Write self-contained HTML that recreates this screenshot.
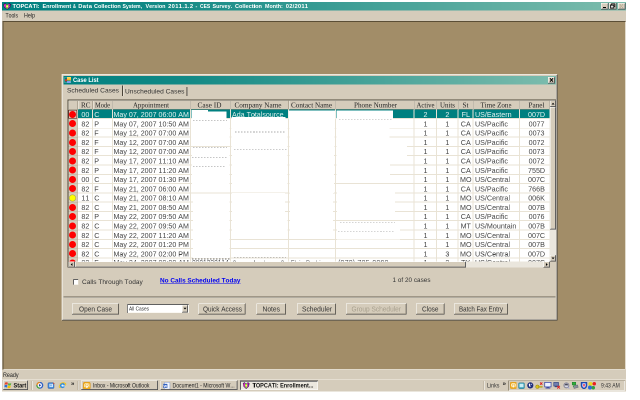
<!DOCTYPE html>
<html><head><meta charset="utf-8"><title>TOPCATI: Enrollment &amp; Data Collection System</title>
<style>
html,body{margin:0;padding:0;background:#fff;width:640px;height:400px;overflow:hidden}
#root{position:absolute;left:0;top:0;width:1280px;height:800px;transform:scale(0.5);transform-origin:0 0;overflow:hidden;background:#fff;will-change:transform}
#root div,#root span,#root svg,#root i{position:absolute;box-sizing:border-box}
.t{white-space:pre;font-kerning:none}
.s{font-family:"Liberation Sans",sans-serif}
.r{font-family:"Liberation Serif",serif}
.b{font-weight:bold}
i{font-style:normal}
</style></head><body><div id="root">
<div style="left:4px;top:4px;width:1248px;height:779.4px;background:#d5ccbb"></div>
<div style="left:4px;top:4px;width:1248px;height:17px;background:linear-gradient(90deg,#008080 0%,#128985 25%,#7dbcad 100%)"></div>
<svg style="left:6px;top:5.8px" width="16.6" height="13.6" viewBox="0 0 16 16" preserveAspectRatio="none"><path d="M0.5 3 L4 0.5 L8 3.5 L12 0.5 L15.5 3 L14 10 L8 15.5 L2 10Z" fill="#1a1030"/><path d="M1.5 3.5 L5 2 L8 5 L11 2 L14.5 3.5 L13.5 9.5 L8 14.5 L2.5 9.5Z" fill="#c426c4"/><path d="M5.4 4.5 L8 3.6 L10.6 4.5 L10 10.5 L8 14 L6 10.5Z" fill="#7ef01a"/><circle cx="8" cy="8" r="2" fill="#fff46a"/><path d="M1.5 3.5 L4.5 5 L3 8.5Z" fill="#e83aa8"/><path d="M14.5 3.5 L11.5 5 L13 8.5Z" fill="#6a1a8a"/></svg>
<span class="t s b" style="left:25.2px;top:5.34px;font-size:11.6px;line-height:13.92px;letter-spacing:0.000px;color:#fff;;transform:scaleX(0.9896);transform-origin:0 50%;">TOPCATI:</span>
<span class="t s b" style="left:84.6px;top:5.34px;font-size:11.6px;line-height:13.92px;letter-spacing:0.000px;color:#fff;;transform:scaleX(0.9475);transform-origin:0 50%;">Enrollment</span>
<span class="t s b" style="left:146.2px;top:5.34px;font-size:11.6px;line-height:13.92px;letter-spacing:0.000px;color:#fff;;transform:scaleX(0.6924);transform-origin:0 50%;">&amp;</span>
<span class="t s b" style="left:156.4px;top:5.34px;font-size:11.6px;line-height:13.92px;letter-spacing:0.819px;color:#fff;">Data</span>
<span class="t s b" style="left:187.6px;top:5.34px;font-size:11.6px;line-height:13.92px;letter-spacing:0.000px;color:#fff;;transform:scaleX(0.9560);transform-origin:0 50%;">Collection</span>
<span class="t s b" style="left:245px;top:5.34px;font-size:11.6px;line-height:13.92px;letter-spacing:0.000px;color:#fff;;transform:scaleX(0.8766);transform-origin:0 50%;">System,</span>
<span class="t s b" style="left:291.2px;top:5.34px;font-size:11.6px;line-height:13.92px;letter-spacing:0.000px;color:#fff;;transform:scaleX(0.9401);transform-origin:0 50%;">Version</span>
<span class="t s b" style="left:336.2px;top:5.34px;font-size:11.6px;line-height:13.92px;letter-spacing:0.692px;color:#fff;">2011.1.2</span>
<span class="t s b" style="left:391.4px;top:5.34px;font-size:11.6px;line-height:13.92px;letter-spacing:0.000px;color:#fff;;transform:scaleX(0.9319);transform-origin:0 50%;">-</span>
<span class="t s b" style="left:399.6px;top:5.34px;font-size:11.6px;line-height:13.92px;letter-spacing:0.000px;color:#fff;;transform:scaleX(0.8553);transform-origin:0 50%;">CES</span>
<span class="t s b" style="left:424.6px;top:5.34px;font-size:11.6px;line-height:13.92px;letter-spacing:0.000px;color:#fff;;transform:scaleX(0.9352);transform-origin:0 50%;">Survey.</span>
<span class="t s b" style="left:470.2px;top:5.34px;font-size:11.6px;line-height:13.92px;letter-spacing:0.000px;color:#fff;;transform:scaleX(0.9595);transform-origin:0 50%;">Collection</span>
<span class="t s b" style="left:529.6px;top:5.34px;font-size:11.6px;line-height:13.92px;letter-spacing:0.000px;color:#fff;;transform:scaleX(0.9212);transform-origin:0 50%;">Month:</span>
<span class="t s b" style="left:571.6px;top:5.34px;font-size:11.6px;line-height:13.92px;letter-spacing:0.411px;color:#fff;">02/2011</span>
<div style="left:1202px;top:6.4px;width:14.6px;height:12.8px;background:#d5ccbb;box-shadow:inset -1px -1px 0 #404040,inset 1px 1px 0 #fff,inset -2px -2px 0 #808080"><i style="position:absolute;left:4px;bottom:3px;width:6px;height:2.4px;background:#000"></i></div>
<div style="left:1217.6px;top:6.4px;width:15px;height:12.8px;background:#d5ccbb;box-shadow:inset -1px -1px 0 #404040,inset 1px 1px 0 #fff,inset -2px -2px 0 #808080"><svg width="15" height="13" viewBox="0 0 15 13" style="left:0;top:0"><rect x="5" y="1.5" width="6.5" height="6" fill="none" stroke="#111" stroke-width="1.6"/><rect x="3" y="4" width="6.5" height="6" fill="#ddd" stroke="#111" stroke-width="1.6"/><rect x="3" y="3.6" width="6.5" height="1.6" fill="#111"/></svg></div>
<div style="left:1236px;top:6.4px;width:14.6px;height:12.8px;background:#d5ccbb;box-shadow:inset -1px -1px 0 #404040,inset 1px 1px 0 #fff,inset -2px -2px 0 #808080"><svg width="15" height="13" viewBox="0 0 15 13" style="left:0;top:0"><path d="M4 2.5 L10.5 10 M10.5 2.5 L4 10" stroke="#a89a7c" stroke-width="1.7" fill="none"/><path d="M5 2.5 L11.5 10 M11.5 2.5 L5 10" stroke="#fff" stroke-width="0.8" fill="none" opacity="0.7"/></svg></div>
<span class="t s" style="left:11px;top:24px;font-size:12px;line-height:14.4px;letter-spacing:0.000px;color:#222;;transform:scaleX(0.8520);transform-origin:0 50%;">Tools</span>
<span class="t s" style="left:48px;top:24px;font-size:12px;line-height:14.4px;letter-spacing:0.000px;color:#222;;transform:scaleX(0.8914);transform-origin:0 50%;">Help</span>
<div style="left:5.2px;top:42px;width:1245.6px;height:697.2px;background:#a28d68;box-shadow:inset 2px 2px 0 #5b4e36, inset -1px -1px 0 #efe9dc"></div>
<span class="t s" style="left:6.4px;top:742.2px;font-size:13px;line-height:15.6px;letter-spacing:0.000px;color:#222;;transform:scaleX(0.8303);transform-origin:0 50%;">Ready</span>
<div style="left:4px;top:758.4px;width:1248px;height:25px;background:#d5ccbb;border-top:1px solid #f4f0e6"></div>
<div style="left:123.2px;top:148px;width:992.2px;height:492.6px;background:#d5ccbb;box-shadow:inset 1px 1px 0 #ddd5c5,inset -1px -1px 0 #404040,inset 2px 2px 0 #fbf9f4,inset -2px -2px 0 #808080"></div>
<div style="left:126.8px;top:151.8px;width:985.2px;height:17px;background:linear-gradient(90deg,#008080 0%,#128985 25%,#7dbcad 100%)"></div>
<div style="left:128.6px;top:154.4px;width:13.4px;height:11.6px;box-shadow:inset 0 0 0 1px rgba(190,220,215,.55)"></div>
<div style="left:133.8px;top:154.2px;width:8.4px;height:6.8px;background:linear-gradient(180deg,#ffe070,#f0b010);border-radius:1px"></div>
<div style="left:129.8px;top:157.8px;width:4.6px;height:5.2px;background:#d83030;border-radius:2px"></div>
<div style="left:134px;top:162.4px;width:7.4px;height:3.4px;background:#7a9cf4;border-radius:1px"></div>
<span class="t s b" style="left:145.6px;top:152.8px;font-size:12px;line-height:14.4px;letter-spacing:0.000px;color:#fff;;transform:scaleX(0.9596);transform-origin:0 50%;">Case List</span>
<div style="left:1095.6px;top:153.8px;width:14.6px;height:12.8px;background:#d5ccbb;box-shadow:inset -1px -1px 0 #404040,inset 1px 1px 0 #fff,inset -2px -2px 0 #808080"><svg width="15" height="13" viewBox="0 0 15 13" style="left:0;top:0"><path d="M4 2.6 L10 9.4 M10 2.6 L4 9.4" stroke="#000" stroke-width="2" fill="none"/></svg></div>
<span class="t s" style="left:134px;top:172.68px;font-size:13.2px;line-height:15.84px;letter-spacing:0.038px;color:#333;">Scheduled Cases</span>
<div style="left:243.8px;top:171.2px;width:1.8px;height:21.2px;background:#4a4438"></div>
<div style="left:245.6px;top:171.2px;width:1.4px;height:21.2px;background:#f4f0e8"></div>
<span class="t s" style="left:250px;top:174.68px;font-size:13.2px;line-height:15.84px;letter-spacing:0.054px;color:#333;">Unscheduled Cases</span>
<div style="left:373px;top:174px;width:1.6px;height:18.4px;background:#403a30"></div>
<div style="left:374.6px;top:174px;width:1.2px;height:18.4px;background:#f4f0e8"></div>
<div style="left:135.2px;top:198.6px;width:977.2px;height:336.6px;background:#fff;box-shadow:inset 2px 2px 0 #4f4838"></div>
<div style="left:137.2px;top:200.8px;width:962px;height:18.3px;background:#d5ccbb"></div>
<div style="left:137.2px;top:200.8px;width:18.8px;height:18.3px;box-shadow:inset 1px 1px 0 #f7f3ea,inset -1px -1px 0 #8b826f"></div>
<div style="left:156px;top:200.8px;width:29.6px;height:18.3px;box-shadow:inset 1px 1px 0 #f7f3ea,inset -1px -1px 0 #8b826f"></div>
<span class="t r" style="left:162px;top:200.8px;font-size:15px;line-height:18px;letter-spacing:0.000px;color:#262626;;transform:scaleX(0.9495);transform-origin:0 50%;">RC</span>
<div style="left:185.6px;top:200.8px;width:39.4px;height:18.3px;box-shadow:inset 1px 1px 0 #f7f3ea,inset -1px -1px 0 #8b826f"></div>
<span class="t r" style="left:190px;top:200.8px;font-size:15px;line-height:18px;letter-spacing:0.000px;color:#262626;;transform:scaleX(0.8573);transform-origin:0 50%;">Mode</span>
<div style="left:225px;top:200.8px;width:156.2px;height:18.3px;box-shadow:inset 1px 1px 0 #f7f3ea,inset -1px -1px 0 #8b826f"></div>
<span class="t r" style="left:266px;top:200.8px;font-size:15px;line-height:18px;letter-spacing:0.000px;color:#262626;;transform:scaleX(0.9096);transform-origin:0 50%;">Appointment</span>
<div style="left:381.2px;top:200.8px;width:80px;height:18.3px;box-shadow:inset 1px 1px 0 #f7f3ea,inset -1px -1px 0 #8b826f"></div>
<span class="t r" style="left:395px;top:200.8px;font-size:15px;line-height:18px;letter-spacing:0.000px;color:#262626;;transform:scaleX(0.9849);transform-origin:0 50%;">Case ID</span>
<div style="left:461.2px;top:200.8px;width:116.3px;height:18.3px;box-shadow:inset 1px 1px 0 #f7f3ea,inset -1px -1px 0 #8b826f"></div>
<span class="t r" style="left:469px;top:200.8px;font-size:15px;line-height:18px;letter-spacing:0.000px;color:#262626;;transform:scaleX(0.9602);transform-origin:0 50%;">Company Name</span>
<div style="left:577.5px;top:200.8px;width:93.7px;height:18.3px;box-shadow:inset 1px 1px 0 #f7f3ea,inset -1px -1px 0 #8b826f"></div>
<span class="t r" style="left:582px;top:200.8px;font-size:15px;line-height:18px;letter-spacing:0.000px;color:#262626;;transform:scaleX(0.9511);transform-origin:0 50%;">Contact Name</span>
<div style="left:671.2px;top:200.8px;width:157.6px;height:18.3px;box-shadow:inset 1px 1px 0 #f7f3ea,inset -1px -1px 0 #8b826f"></div>
<span class="t r" style="left:708px;top:200.8px;font-size:15px;line-height:18px;letter-spacing:0.000px;color:#262626;;transform:scaleX(0.9513);transform-origin:0 50%;">Phone Number</span>
<div style="left:828.8px;top:200.8px;width:44.2px;height:18.3px;box-shadow:inset 1px 1px 0 #f7f3ea,inset -1px -1px 0 #8b826f"></div>
<span class="t r" style="left:833px;top:200.8px;font-size:15px;line-height:18px;letter-spacing:0.000px;color:#262626;;transform:scaleX(0.9004);transform-origin:0 50%;">Active</span>
<div style="left:873px;top:200.8px;width:43.5px;height:18.3px;box-shadow:inset 1px 1px 0 #f7f3ea,inset -1px -1px 0 #8b826f"></div>
<span class="t r" style="left:880px;top:200.8px;font-size:15px;line-height:18px;letter-spacing:0.000px;color:#262626;;transform:scaleX(0.9229);transform-origin:0 50%;">Units</span>
<div style="left:916.5px;top:200.8px;width:30px;height:18.3px;box-shadow:inset 1px 1px 0 #f7f3ea,inset -1px -1px 0 #8b826f"></div>
<span class="t r" style="left:925px;top:200.8px;font-size:15px;line-height:18px;letter-spacing:0.000px;color:#262626;;transform:scaleX(0.9593);transform-origin:0 50%;">St</span>
<div style="left:946.5px;top:200.8px;width:92.5px;height:18.3px;box-shadow:inset 1px 1px 0 #f7f3ea,inset -1px -1px 0 #8b826f"></div>
<span class="t r" style="left:961px;top:200.8px;font-size:15px;line-height:18px;letter-spacing:0.000px;color:#262626;;transform:scaleX(0.9362);transform-origin:0 50%;">Time Zone</span>
<div style="left:1039px;top:200.8px;width:60.2px;height:18.3px;box-shadow:inset 1px 1px 0 #f7f3ea,inset -1px -1px 0 #8b826f"></div>
<span class="t r" style="left:1057px;top:200.8px;font-size:15px;line-height:18px;letter-spacing:0.000px;color:#262626;;transform:scaleX(0.9602);transform-origin:0 50%;">Panel</span>
<div style="left:137.2px;top:219.1px;width:18.8px;height:18.57px;background:#d5ccbb;box-shadow:inset -1px -1px 0 #b9b09c"></div>
<div style="left:156px;top:219.1px;width:943.2px;height:18.57px;background:#008080"></div>
<div style="left:156px;top:236.17px;width:943.2px;height:2px;background:#e9e3d5"></div>
<div style="left:138.2px;top:221.9px;width:14px;height:14px;background:#ff0000;border-radius:50%;"></div>
<div style="left:137.2px;top:220.1px;width:17.2px;height:17px;box-shadow:inset 0 0 0 1px #6b2020"></div>
<span class="t s" style="left:162.85px;top:221.2px;font-size:14.3px;line-height:17.16px;letter-spacing:-0.000px;color:#e2f2f0;">00</span>
<span class="t s" style="left:188.6px;top:221.2px;font-size:14.3px;line-height:17.16px;letter-spacing:-0.000px;color:#e2f2f0;">C</span>
<span class="t s" style="left:227.2px;top:221.2px;font-size:14.3px;line-height:17.16px;letter-spacing:0.000px;color:#e2f2f0;;transform:scaleX(0.9932);transform-origin:0 50%;">May 07, 2007 06:00 AM</span>
<span class="t s" style="left:846.92px;top:221.2px;font-size:14.3px;line-height:17.16px;letter-spacing:0.000px;color:#e2f2f0;">2</span>
<span class="t s" style="left:890.77px;top:221.2px;font-size:14.3px;line-height:17.16px;letter-spacing:0.000px;color:#e2f2f0;">2</span>
<span class="t s" style="left:923.16px;top:221.2px;font-size:14.3px;line-height:17.16px;letter-spacing:0.000px;color:#e2f2f0;">FL</span>
<span class="t s" style="left:950px;top:221.2px;font-size:14.3px;line-height:17.16px;letter-spacing:0.000px;color:#e2f2f0;">US/Eastern</span>
<span class="t s" style="left:1056.01px;top:221.2px;font-size:14.3px;line-height:17.16px;letter-spacing:0.000px;color:#e2f2f0;">007D</span>
<div style="left:137.2px;top:237.67px;width:18.8px;height:18.57px;background:#d5ccbb;box-shadow:inset -1px -1px 0 #b9b09c"></div>
<div style="left:156px;top:254.74px;width:943.2px;height:2px;background:#e9e3d5"></div>
<div style="left:138.2px;top:240.47px;width:14px;height:14px;background:#ff0000;border-radius:50%;"></div>
<span class="t s" style="left:162.85px;top:239.77px;font-size:14.3px;line-height:17.16px;letter-spacing:-0.000px;color:#444;">82</span>
<span class="t s" style="left:188.6px;top:239.77px;font-size:14.3px;line-height:17.16px;letter-spacing:0.000px;color:#444;">P</span>
<span class="t s" style="left:227.2px;top:239.77px;font-size:14.3px;line-height:17.16px;letter-spacing:0.000px;color:#444;;transform:scaleX(0.9932);transform-origin:0 50%;">May 07, 2007 10:50 AM</span>
<span class="t s" style="left:846.92px;top:239.77px;font-size:14.3px;line-height:17.16px;letter-spacing:0.000px;color:#444;">1</span>
<span class="t s" style="left:890.77px;top:239.77px;font-size:14.3px;line-height:17.16px;letter-spacing:0.000px;color:#444;">1</span>
<span class="t s" style="left:921.57px;top:239.77px;font-size:14.3px;line-height:17.16px;letter-spacing:0.000px;color:#444;">CA</span>
<span class="t s" style="left:950px;top:239.77px;font-size:14.3px;line-height:17.16px;letter-spacing:0.000px;color:#444;">US/Pacific</span>
<span class="t s" style="left:1057.19px;top:239.77px;font-size:14.3px;line-height:17.16px;letter-spacing:0.000px;color:#444;">0077</span>
<div style="left:137.2px;top:256.24px;width:18.8px;height:18.57px;background:#d5ccbb;box-shadow:inset -1px -1px 0 #b9b09c"></div>
<div style="left:156px;top:273.31px;width:943.2px;height:2px;background:#e9e3d5"></div>
<div style="left:138.2px;top:259.04px;width:14px;height:14px;background:#ff0000;border-radius:50%;"></div>
<span class="t s" style="left:162.85px;top:258.35px;font-size:14.3px;line-height:17.16px;letter-spacing:-0.000px;color:#444;">82</span>
<span class="t s" style="left:188.6px;top:258.35px;font-size:14.3px;line-height:17.16px;letter-spacing:0.000px;color:#444;">F</span>
<span class="t s" style="left:227.2px;top:258.35px;font-size:14.3px;line-height:17.16px;letter-spacing:0.000px;color:#444;;transform:scaleX(0.9932);transform-origin:0 50%;">May 12, 2007 07:00 AM</span>
<span class="t s" style="left:846.92px;top:258.35px;font-size:14.3px;line-height:17.16px;letter-spacing:0.000px;color:#444;">1</span>
<span class="t s" style="left:890.77px;top:258.35px;font-size:14.3px;line-height:17.16px;letter-spacing:0.000px;color:#444;">1</span>
<span class="t s" style="left:921.57px;top:258.35px;font-size:14.3px;line-height:17.16px;letter-spacing:0.000px;color:#444;">CA</span>
<span class="t s" style="left:950px;top:258.35px;font-size:14.3px;line-height:17.16px;letter-spacing:0.000px;color:#444;">US/Pacific</span>
<span class="t s" style="left:1057.19px;top:258.35px;font-size:14.3px;line-height:17.16px;letter-spacing:0.000px;color:#444;">0073</span>
<div style="left:137.2px;top:274.81px;width:18.8px;height:18.57px;background:#d5ccbb;box-shadow:inset -1px -1px 0 #b9b09c"></div>
<div style="left:156px;top:291.88px;width:943.2px;height:2px;background:#e9e3d5"></div>
<div style="left:138.2px;top:277.61px;width:14px;height:14px;background:#ff0000;border-radius:50%;"></div>
<span class="t s" style="left:162.85px;top:276.92px;font-size:14.3px;line-height:17.16px;letter-spacing:-0.000px;color:#444;">82</span>
<span class="t s" style="left:188.6px;top:276.92px;font-size:14.3px;line-height:17.16px;letter-spacing:0.000px;color:#444;">F</span>
<span class="t s" style="left:227.2px;top:276.92px;font-size:14.3px;line-height:17.16px;letter-spacing:0.000px;color:#444;;transform:scaleX(0.9932);transform-origin:0 50%;">May 12, 2007 07:00 AM</span>
<span class="t s" style="left:846.92px;top:276.92px;font-size:14.3px;line-height:17.16px;letter-spacing:0.000px;color:#444;">1</span>
<span class="t s" style="left:890.77px;top:276.92px;font-size:14.3px;line-height:17.16px;letter-spacing:0.000px;color:#444;">1</span>
<span class="t s" style="left:921.57px;top:276.92px;font-size:14.3px;line-height:17.16px;letter-spacing:0.000px;color:#444;">CA</span>
<span class="t s" style="left:950px;top:276.92px;font-size:14.3px;line-height:17.16px;letter-spacing:0.000px;color:#444;">US/Pacific</span>
<span class="t s" style="left:1057.19px;top:276.92px;font-size:14.3px;line-height:17.16px;letter-spacing:0.000px;color:#444;">0072</span>
<div style="left:137.2px;top:293.38px;width:18.8px;height:18.57px;background:#d5ccbb;box-shadow:inset -1px -1px 0 #b9b09c"></div>
<div style="left:156px;top:310.45px;width:943.2px;height:2px;background:#e9e3d5"></div>
<div style="left:138.2px;top:296.18px;width:14px;height:14px;background:#ff0000;border-radius:50%;"></div>
<span class="t s" style="left:162.85px;top:295.49px;font-size:14.3px;line-height:17.16px;letter-spacing:-0.000px;color:#444;">82</span>
<span class="t s" style="left:188.6px;top:295.49px;font-size:14.3px;line-height:17.16px;letter-spacing:0.000px;color:#444;">F</span>
<span class="t s" style="left:227.2px;top:295.49px;font-size:14.3px;line-height:17.16px;letter-spacing:0.000px;color:#444;;transform:scaleX(0.9932);transform-origin:0 50%;">May 12, 2007 07:00 AM</span>
<span class="t s" style="left:846.92px;top:295.49px;font-size:14.3px;line-height:17.16px;letter-spacing:0.000px;color:#444;">1</span>
<span class="t s" style="left:890.77px;top:295.49px;font-size:14.3px;line-height:17.16px;letter-spacing:0.000px;color:#444;">1</span>
<span class="t s" style="left:921.57px;top:295.49px;font-size:14.3px;line-height:17.16px;letter-spacing:0.000px;color:#444;">CA</span>
<span class="t s" style="left:950px;top:295.49px;font-size:14.3px;line-height:17.16px;letter-spacing:0.000px;color:#444;">US/Pacific</span>
<span class="t s" style="left:1057.19px;top:295.49px;font-size:14.3px;line-height:17.16px;letter-spacing:0.000px;color:#444;">0073</span>
<div style="left:137.2px;top:311.95px;width:18.8px;height:18.57px;background:#d5ccbb;box-shadow:inset -1px -1px 0 #b9b09c"></div>
<div style="left:156px;top:329.02px;width:943.2px;height:2px;background:#e9e3d5"></div>
<div style="left:138.2px;top:314.75px;width:14px;height:14px;background:#ff0000;border-radius:50%;"></div>
<span class="t s" style="left:162.85px;top:314.06px;font-size:14.3px;line-height:17.16px;letter-spacing:-0.000px;color:#444;">82</span>
<span class="t s" style="left:188.6px;top:314.06px;font-size:14.3px;line-height:17.16px;letter-spacing:0.000px;color:#444;">P</span>
<span class="t s" style="left:227.2px;top:314.06px;font-size:14.3px;line-height:17.16px;letter-spacing:0.000px;color:#444;;transform:scaleX(0.9932);transform-origin:0 50%;">May 17, 2007 11:10 AM</span>
<span class="t s" style="left:846.92px;top:314.06px;font-size:14.3px;line-height:17.16px;letter-spacing:0.000px;color:#444;">1</span>
<span class="t s" style="left:890.77px;top:314.06px;font-size:14.3px;line-height:17.16px;letter-spacing:0.000px;color:#444;">1</span>
<span class="t s" style="left:921.57px;top:314.06px;font-size:14.3px;line-height:17.16px;letter-spacing:0.000px;color:#444;">CA</span>
<span class="t s" style="left:950px;top:314.06px;font-size:14.3px;line-height:17.16px;letter-spacing:0.000px;color:#444;">US/Pacific</span>
<span class="t s" style="left:1057.19px;top:314.06px;font-size:14.3px;line-height:17.16px;letter-spacing:0.000px;color:#444;">0072</span>
<div style="left:137.2px;top:330.52px;width:18.8px;height:18.57px;background:#d5ccbb;box-shadow:inset -1px -1px 0 #b9b09c"></div>
<div style="left:156px;top:347.59px;width:943.2px;height:2px;background:#e9e3d5"></div>
<div style="left:138.2px;top:333.32px;width:14px;height:14px;background:#ff0000;border-radius:50%;"></div>
<span class="t s" style="left:162.85px;top:332.62px;font-size:14.3px;line-height:17.16px;letter-spacing:-0.000px;color:#444;">82</span>
<span class="t s" style="left:188.6px;top:332.62px;font-size:14.3px;line-height:17.16px;letter-spacing:0.000px;color:#444;">P</span>
<span class="t s" style="left:227.2px;top:332.62px;font-size:14.3px;line-height:17.16px;letter-spacing:0.000px;color:#444;;transform:scaleX(0.9932);transform-origin:0 50%;">May 17, 2007 11:20 AM</span>
<span class="t s" style="left:846.92px;top:332.62px;font-size:14.3px;line-height:17.16px;letter-spacing:0.000px;color:#444;">1</span>
<span class="t s" style="left:890.77px;top:332.62px;font-size:14.3px;line-height:17.16px;letter-spacing:0.000px;color:#444;">1</span>
<span class="t s" style="left:921.57px;top:332.62px;font-size:14.3px;line-height:17.16px;letter-spacing:0.000px;color:#444;">CA</span>
<span class="t s" style="left:950px;top:332.62px;font-size:14.3px;line-height:17.16px;letter-spacing:0.000px;color:#444;">US/Pacific</span>
<span class="t s" style="left:1056.01px;top:332.62px;font-size:14.3px;line-height:17.16px;letter-spacing:0.000px;color:#444;">755D</span>
<div style="left:137.2px;top:349.09px;width:18.8px;height:18.57px;background:#d5ccbb;box-shadow:inset -1px -1px 0 #b9b09c"></div>
<div style="left:156px;top:366.16px;width:943.2px;height:2px;background:#e9e3d5"></div>
<div style="left:138.2px;top:351.89px;width:14px;height:14px;background:#ff0000;border-radius:50%;"></div>
<span class="t s" style="left:162.85px;top:351.2px;font-size:14.3px;line-height:17.16px;letter-spacing:-0.000px;color:#444;">00</span>
<span class="t s" style="left:188.6px;top:351.2px;font-size:14.3px;line-height:17.16px;letter-spacing:-0.000px;color:#444;">C</span>
<span class="t s" style="left:227.2px;top:351.2px;font-size:14.3px;line-height:17.16px;letter-spacing:0.000px;color:#444;;transform:scaleX(0.9932);transform-origin:0 50%;">May 17, 2007 01:30 PM</span>
<span class="t s" style="left:846.92px;top:351.2px;font-size:14.3px;line-height:17.16px;letter-spacing:0.000px;color:#444;">1</span>
<span class="t s" style="left:890.77px;top:351.2px;font-size:14.3px;line-height:17.16px;letter-spacing:0.000px;color:#444;">1</span>
<span class="t s" style="left:919.98px;top:351.2px;font-size:14.3px;line-height:17.16px;letter-spacing:0.000px;color:#444;">MO</span>
<span class="t s" style="left:950px;top:351.2px;font-size:14.3px;line-height:17.16px;letter-spacing:-0.000px;color:#444;">US/Central</span>
<span class="t s" style="left:1056.01px;top:351.2px;font-size:14.3px;line-height:17.16px;letter-spacing:0.000px;color:#444;">007C</span>
<div style="left:137.2px;top:367.66px;width:18.8px;height:18.57px;background:#d5ccbb;box-shadow:inset -1px -1px 0 #b9b09c"></div>
<div style="left:156px;top:384.73px;width:943.2px;height:2px;background:#e9e3d5"></div>
<div style="left:138.2px;top:370.46px;width:14px;height:14px;background:#ff0000;border-radius:50%;"></div>
<span class="t s" style="left:162.85px;top:369.76px;font-size:14.3px;line-height:17.16px;letter-spacing:-0.000px;color:#444;">82</span>
<span class="t s" style="left:188.6px;top:369.76px;font-size:14.3px;line-height:17.16px;letter-spacing:0.000px;color:#444;">F</span>
<span class="t s" style="left:227.2px;top:369.76px;font-size:14.3px;line-height:17.16px;letter-spacing:0.000px;color:#444;;transform:scaleX(0.9932);transform-origin:0 50%;">May 21, 2007 06:00 AM</span>
<span class="t s" style="left:846.92px;top:369.76px;font-size:14.3px;line-height:17.16px;letter-spacing:0.000px;color:#444;">1</span>
<span class="t s" style="left:890.77px;top:369.76px;font-size:14.3px;line-height:17.16px;letter-spacing:0.000px;color:#444;">1</span>
<span class="t s" style="left:921.57px;top:369.76px;font-size:14.3px;line-height:17.16px;letter-spacing:0.000px;color:#444;">CA</span>
<span class="t s" style="left:950px;top:369.76px;font-size:14.3px;line-height:17.16px;letter-spacing:0.000px;color:#444;">US/Pacific</span>
<span class="t s" style="left:1056.4px;top:369.76px;font-size:14.3px;line-height:17.16px;letter-spacing:0.000px;color:#444;">766B</span>
<div style="left:137.2px;top:386.23px;width:18.8px;height:18.57px;background:#d5ccbb;box-shadow:inset -1px -1px 0 #b9b09c"></div>
<div style="left:156px;top:403.3px;width:943.2px;height:2px;background:#e9e3d5"></div>
<div style="left:138.2px;top:389.03px;width:14px;height:14px;background:#ffff00;border-radius:50%;box-shadow:inset 0 0 0 1px #9a9a60;"></div>
<span class="t s" style="left:162.85px;top:388.34px;font-size:14.3px;line-height:17.16px;letter-spacing:-0.000px;color:#444;">11</span>
<span class="t s" style="left:188.6px;top:388.34px;font-size:14.3px;line-height:17.16px;letter-spacing:-0.000px;color:#444;">C</span>
<span class="t s" style="left:227.2px;top:388.34px;font-size:14.3px;line-height:17.16px;letter-spacing:0.000px;color:#444;;transform:scaleX(0.9932);transform-origin:0 50%;">May 21, 2007 08:10 AM</span>
<span class="t s" style="left:846.92px;top:388.34px;font-size:14.3px;line-height:17.16px;letter-spacing:0.000px;color:#444;">1</span>
<span class="t s" style="left:890.77px;top:388.34px;font-size:14.3px;line-height:17.16px;letter-spacing:0.000px;color:#444;">1</span>
<span class="t s" style="left:919.98px;top:388.34px;font-size:14.3px;line-height:17.16px;letter-spacing:0.000px;color:#444;">MO</span>
<span class="t s" style="left:950px;top:388.34px;font-size:14.3px;line-height:17.16px;letter-spacing:-0.000px;color:#444;">US/Central</span>
<span class="t s" style="left:1056.4px;top:388.34px;font-size:14.3px;line-height:17.16px;letter-spacing:0.000px;color:#444;">006K</span>
<div style="left:137.2px;top:404.8px;width:18.8px;height:18.57px;background:#d5ccbb;box-shadow:inset -1px -1px 0 #b9b09c"></div>
<div style="left:156px;top:421.87px;width:943.2px;height:2px;background:#e9e3d5"></div>
<div style="left:138.2px;top:407.6px;width:14px;height:14px;background:#ff0000;border-radius:50%;"></div>
<span class="t s" style="left:162.85px;top:406.9px;font-size:14.3px;line-height:17.16px;letter-spacing:-0.000px;color:#444;">82</span>
<span class="t s" style="left:188.6px;top:406.9px;font-size:14.3px;line-height:17.16px;letter-spacing:-0.000px;color:#444;">C</span>
<span class="t s" style="left:227.2px;top:406.9px;font-size:14.3px;line-height:17.16px;letter-spacing:0.000px;color:#444;;transform:scaleX(0.9932);transform-origin:0 50%;">May 21, 2007 08:50 AM</span>
<span class="t s" style="left:846.92px;top:406.9px;font-size:14.3px;line-height:17.16px;letter-spacing:0.000px;color:#444;">1</span>
<span class="t s" style="left:890.77px;top:406.9px;font-size:14.3px;line-height:17.16px;letter-spacing:0.000px;color:#444;">1</span>
<span class="t s" style="left:919.98px;top:406.9px;font-size:14.3px;line-height:17.16px;letter-spacing:0.000px;color:#444;">MO</span>
<span class="t s" style="left:950px;top:406.9px;font-size:14.3px;line-height:17.16px;letter-spacing:-0.000px;color:#444;">US/Central</span>
<span class="t s" style="left:1056.4px;top:406.9px;font-size:14.3px;line-height:17.16px;letter-spacing:0.000px;color:#444;">007B</span>
<div style="left:137.2px;top:423.37px;width:18.8px;height:18.57px;background:#d5ccbb;box-shadow:inset -1px -1px 0 #b9b09c"></div>
<div style="left:156px;top:440.44px;width:943.2px;height:2px;background:#e9e3d5"></div>
<div style="left:138.2px;top:426.17px;width:14px;height:14px;background:#ff0000;border-radius:50%;"></div>
<span class="t s" style="left:162.85px;top:425.48px;font-size:14.3px;line-height:17.16px;letter-spacing:-0.000px;color:#444;">82</span>
<span class="t s" style="left:188.6px;top:425.48px;font-size:14.3px;line-height:17.16px;letter-spacing:0.000px;color:#444;">P</span>
<span class="t s" style="left:227.2px;top:425.48px;font-size:14.3px;line-height:17.16px;letter-spacing:0.000px;color:#444;;transform:scaleX(0.9932);transform-origin:0 50%;">May 22, 2007 09:50 AM</span>
<span class="t s" style="left:846.92px;top:425.48px;font-size:14.3px;line-height:17.16px;letter-spacing:0.000px;color:#444;">1</span>
<span class="t s" style="left:890.77px;top:425.48px;font-size:14.3px;line-height:17.16px;letter-spacing:0.000px;color:#444;">1</span>
<span class="t s" style="left:921.57px;top:425.48px;font-size:14.3px;line-height:17.16px;letter-spacing:0.000px;color:#444;">CA</span>
<span class="t s" style="left:950px;top:425.48px;font-size:14.3px;line-height:17.16px;letter-spacing:0.000px;color:#444;">US/Pacific</span>
<span class="t s" style="left:1057.19px;top:425.48px;font-size:14.3px;line-height:17.16px;letter-spacing:0.000px;color:#444;">0076</span>
<div style="left:137.2px;top:441.94px;width:18.8px;height:18.57px;background:#d5ccbb;box-shadow:inset -1px -1px 0 #b9b09c"></div>
<div style="left:156px;top:459.01px;width:943.2px;height:2px;background:#e9e3d5"></div>
<div style="left:138.2px;top:444.74px;width:14px;height:14px;background:#ff0000;border-radius:50%;"></div>
<span class="t s" style="left:162.85px;top:444.05px;font-size:14.3px;line-height:17.16px;letter-spacing:-0.000px;color:#444;">82</span>
<span class="t s" style="left:188.6px;top:444.05px;font-size:14.3px;line-height:17.16px;letter-spacing:-0.000px;color:#444;">C</span>
<span class="t s" style="left:227.2px;top:444.05px;font-size:14.3px;line-height:17.16px;letter-spacing:0.000px;color:#444;;transform:scaleX(0.9932);transform-origin:0 50%;">May 22, 2007 09:50 AM</span>
<span class="t s" style="left:846.92px;top:444.05px;font-size:14.3px;line-height:17.16px;letter-spacing:0.000px;color:#444;">1</span>
<span class="t s" style="left:890.77px;top:444.05px;font-size:14.3px;line-height:17.16px;letter-spacing:0.000px;color:#444;">1</span>
<span class="t s" style="left:921.18px;top:444.05px;font-size:14.3px;line-height:17.16px;letter-spacing:0.000px;color:#444;">MT</span>
<span class="t s" style="left:950px;top:444.05px;font-size:14.3px;line-height:17.16px;letter-spacing:0.000px;color:#444;">US/Mountain</span>
<span class="t s" style="left:1056.4px;top:444.05px;font-size:14.3px;line-height:17.16px;letter-spacing:0.000px;color:#444;">007B</span>
<div style="left:137.2px;top:460.51px;width:18.8px;height:18.57px;background:#d5ccbb;box-shadow:inset -1px -1px 0 #b9b09c"></div>
<div style="left:156px;top:477.58px;width:943.2px;height:2px;background:#e9e3d5"></div>
<div style="left:138.2px;top:463.31px;width:14px;height:14px;background:#ff0000;border-radius:50%;"></div>
<span class="t s" style="left:162.85px;top:462.62px;font-size:14.3px;line-height:17.16px;letter-spacing:-0.000px;color:#444;">82</span>
<span class="t s" style="left:188.6px;top:462.62px;font-size:14.3px;line-height:17.16px;letter-spacing:-0.000px;color:#444;">C</span>
<span class="t s" style="left:227.2px;top:462.62px;font-size:14.3px;line-height:17.16px;letter-spacing:0.000px;color:#444;;transform:scaleX(0.9932);transform-origin:0 50%;">May 22, 2007 11:20 AM</span>
<span class="t s" style="left:846.92px;top:462.62px;font-size:14.3px;line-height:17.16px;letter-spacing:0.000px;color:#444;">1</span>
<span class="t s" style="left:890.77px;top:462.62px;font-size:14.3px;line-height:17.16px;letter-spacing:0.000px;color:#444;">1</span>
<span class="t s" style="left:919.98px;top:462.62px;font-size:14.3px;line-height:17.16px;letter-spacing:0.000px;color:#444;">MO</span>
<span class="t s" style="left:950px;top:462.62px;font-size:14.3px;line-height:17.16px;letter-spacing:-0.000px;color:#444;">US/Central</span>
<span class="t s" style="left:1056.01px;top:462.62px;font-size:14.3px;line-height:17.16px;letter-spacing:0.000px;color:#444;">007C</span>
<div style="left:137.2px;top:479.08px;width:18.8px;height:18.57px;background:#d5ccbb;box-shadow:inset -1px -1px 0 #b9b09c"></div>
<div style="left:156px;top:496.15px;width:943.2px;height:2px;background:#e9e3d5"></div>
<div style="left:138.2px;top:481.88px;width:14px;height:14px;background:#ff0000;border-radius:50%;"></div>
<span class="t s" style="left:162.85px;top:481.19px;font-size:14.3px;line-height:17.16px;letter-spacing:-0.000px;color:#444;">82</span>
<span class="t s" style="left:188.6px;top:481.19px;font-size:14.3px;line-height:17.16px;letter-spacing:-0.000px;color:#444;">C</span>
<span class="t s" style="left:227.2px;top:481.19px;font-size:14.3px;line-height:17.16px;letter-spacing:0.000px;color:#444;;transform:scaleX(0.9932);transform-origin:0 50%;">May 22, 2007 01:20 PM</span>
<span class="t s" style="left:846.92px;top:481.19px;font-size:14.3px;line-height:17.16px;letter-spacing:0.000px;color:#444;">1</span>
<span class="t s" style="left:890.77px;top:481.19px;font-size:14.3px;line-height:17.16px;letter-spacing:0.000px;color:#444;">1</span>
<span class="t s" style="left:919.98px;top:481.19px;font-size:14.3px;line-height:17.16px;letter-spacing:0.000px;color:#444;">MO</span>
<span class="t s" style="left:950px;top:481.19px;font-size:14.3px;line-height:17.16px;letter-spacing:-0.000px;color:#444;">US/Central</span>
<span class="t s" style="left:1056.4px;top:481.19px;font-size:14.3px;line-height:17.16px;letter-spacing:0.000px;color:#444;">007B</span>
<div style="left:137.2px;top:497.65px;width:18.8px;height:18.57px;background:#d5ccbb;box-shadow:inset -1px -1px 0 #b9b09c"></div>
<div style="left:156px;top:514.72px;width:943.2px;height:2px;background:#e9e3d5"></div>
<div style="left:138.2px;top:500.45px;width:14px;height:14px;background:#ff0000;border-radius:50%;"></div>
<span class="t s" style="left:162.85px;top:499.75px;font-size:14.3px;line-height:17.16px;letter-spacing:-0.000px;color:#444;">82</span>
<span class="t s" style="left:188.6px;top:499.75px;font-size:14.3px;line-height:17.16px;letter-spacing:-0.000px;color:#444;">C</span>
<span class="t s" style="left:227.2px;top:499.75px;font-size:14.3px;line-height:17.16px;letter-spacing:0.000px;color:#444;;transform:scaleX(0.9932);transform-origin:0 50%;">May 22, 2007 02:00 PM</span>
<span class="t s" style="left:846.92px;top:499.75px;font-size:14.3px;line-height:17.16px;letter-spacing:0.000px;color:#444;">1</span>
<span class="t s" style="left:890.77px;top:499.75px;font-size:14.3px;line-height:17.16px;letter-spacing:0.000px;color:#444;">3</span>
<span class="t s" style="left:919.98px;top:499.75px;font-size:14.3px;line-height:17.16px;letter-spacing:0.000px;color:#444;">MO</span>
<span class="t s" style="left:950px;top:499.75px;font-size:14.3px;line-height:17.16px;letter-spacing:-0.000px;color:#444;">US/Central</span>
<span class="t s" style="left:1056.01px;top:499.75px;font-size:14.3px;line-height:17.16px;letter-spacing:0.000px;color:#444;">007D</span>
<div style="left:0;top:0;width:1280px;height:523px;overflow:hidden">
<div style="left:137.2px;top:516.22px;width:18.8px;height:6.78px;background:#d5ccbb;box-shadow:inset -1px -1px 0 #b9b09c"></div>
<div style="left:156px;top:533.29px;width:943.2px;height:2px;background:#e9e3d5"></div>
<div style="left:138.2px;top:519.02px;width:14px;height:14px;background:#ff0000;border-radius:50%;"></div>
<span class="t s" style="left:162.85px;top:516.92px;font-size:14.3px;line-height:17.16px;letter-spacing:-0.000px;color:#444;">82</span>
<span class="t s" style="left:188.6px;top:516.92px;font-size:14.3px;line-height:17.16px;letter-spacing:0.000px;color:#444;">F</span>
<span class="t s" style="left:227.2px;top:516.92px;font-size:14.3px;line-height:17.16px;letter-spacing:0.000px;color:#444;;transform:scaleX(0.9932);transform-origin:0 50%;">May 24, 2007 09:00 AM</span>
<span class="t s" style="left:846.92px;top:516.92px;font-size:14.3px;line-height:17.16px;letter-spacing:0.000px;color:#444;">1</span>
<span class="t s" style="left:890.77px;top:516.92px;font-size:14.3px;line-height:17.16px;letter-spacing:0.000px;color:#444;">2</span>
<span class="t s" style="left:922.36px;top:516.92px;font-size:14.3px;line-height:17.16px;letter-spacing:0.000px;color:#444;">TX</span>
<span class="t s" style="left:950px;top:516.92px;font-size:14.3px;line-height:17.16px;letter-spacing:-0.000px;color:#444;">US/Central</span>
<span class="t s" style="left:1056.01px;top:516.92px;font-size:14.3px;line-height:17.16px;letter-spacing:0.000px;color:#444;">007C</span>
<span class="t s" style="left:384.4px;top:516.92px;font-size:14.3px;line-height:17.16px;letter-spacing:0.000px;color:#444;;transform:scaleX(0.9254);transform-origin:0 50%;">0001330114</span>
<span class="t s" style="left:464.8px;top:517.53px;font-size:13.3px;line-height:15.96px;letter-spacing:0.000px;color:#444;;transform:scaleX(0.7815);transform-origin:0 50%;">Ocampo Landscape Co</span>
<span class="t s" style="left:580.8px;top:517.53px;font-size:13.3px;line-height:15.96px;letter-spacing:0.000px;color:#444;;transform:scaleX(0.9362);transform-origin:0 50%;">Elvia Rodriguez</span>
<span class="t s" style="left:676px;top:516.92px;font-size:14.3px;line-height:17.16px;letter-spacing:0.247px;color:#444;">(979) 785-0000</span>
</div>
<div style="left:184.1px;top:219.1px;width:2px;height:303.9px;background:#e9e3d5"></div>
<div style="left:223.5px;top:219.1px;width:2px;height:303.9px;background:#e9e3d5"></div>
<div style="left:379.7px;top:219.1px;width:2px;height:303.9px;background:#e9e3d5"></div>
<div style="left:459.7px;top:219.1px;width:2px;height:303.9px;background:#e9e3d5"></div>
<div style="left:576px;top:219.1px;width:2px;height:303.9px;background:#e9e3d5"></div>
<div style="left:669.7px;top:219.1px;width:2px;height:303.9px;background:#e9e3d5"></div>
<div style="left:827.3px;top:219.1px;width:2px;height:303.9px;background:#e9e3d5"></div>
<div style="left:871.5px;top:219.1px;width:2px;height:303.9px;background:#e9e3d5"></div>
<div style="left:915px;top:219.1px;width:2px;height:303.9px;background:#e9e3d5"></div>
<div style="left:945px;top:219.1px;width:2px;height:303.9px;background:#e9e3d5"></div>
<div style="left:1037.5px;top:219.1px;width:2px;height:303.9px;background:#e9e3d5"></div>
<div style="left:1099.2px;top:200.8px;width:12.8px;height:322.2px;background:#eae6dd"></div>
<div style="left:137.2px;top:523px;width:974.8px;height:11.8px;background:#eae6dd"></div>
<div style="left:1099.6px;top:200.8px;width:12.2px;height:12.8px;background:#d5ccbb;box-shadow:inset -1px -1px 0 #404040,inset 1px 1px 0 #fff,inset -2px -2px 0 #808080"><svg width="12.2" height="12.8" style="position:absolute;left:0;top:0"><polygon points="3.1000000000000227,7.900000000000006 9.100000000000023,7.900000000000006 6.100000000000023,4.400000000000006" fill="#000"/></svg></div>
<div style="left:1099.6px;top:213.6px;width:12.2px;height:245.2px;background:#d5ccbb;box-shadow:inset -1px -1px 0 #404040,inset 1px 1px 0 #fff,inset -2px -2px 0 #808080"></div>
<div style="left:1099.6px;top:510.2px;width:12.2px;height:12.8px;background:#d5ccbb;box-shadow:inset -1px -1px 0 #404040,inset 1px 1px 0 #fff,inset -2px -2px 0 #808080"><svg width="12.2" height="12.8" style="position:absolute;left:0;top:0"><polygon points="3.1000000000000227,4.900000000000006 9.100000000000023,4.900000000000006 6.100000000000023,8.400000000000006" fill="#000"/></svg></div>
<div style="left:137.2px;top:523px;width:12.8px;height:12px;background:#d5ccbb;box-shadow:inset -1px -1px 0 #404040,inset 1px 1px 0 #fff,inset -2px -2px 0 #808080"><svg width="12.8" height="12" style="position:absolute;left:0;top:0"><polygon points="7.900000000000006,3.0 7.900000000000006,9.0 4.400000000000006,6.0" fill="#000"/></svg></div>
<div style="left:150px;top:523px;width:781.6px;height:12px;background:#d5ccbb;box-shadow:inset -1px -1px 0 #404040,inset 1px 1px 0 #fff,inset -2px -2px 0 #808080"></div>
<div style="left:1086.8px;top:523px;width:12.8px;height:12px;background:#d5ccbb;box-shadow:inset -1px -1px 0 #404040,inset 1px 1px 0 #fff,inset -2px -2px 0 #808080"><svg width="12.8" height="12" style="position:absolute;left:0;top:0"><polygon points="4.900000000000091,3.0 4.900000000000091,9.0 8.400000000000091,6.0" fill="#000"/></svg></div>
<div style="left:1099.6px;top:523px;width:12.4px;height:11.8px;background:#d5ccbb"></div>
<div style="left:382.8px;top:219.5px;width:33.2px;height:18.17px;background:#fff"></div>
<div style="left:415.6px;top:222.7px;width:37.2px;height:14.97px;background:#fff"></div>
<div style="left:463.2px;top:234.1px;width:107.8px;height:3.57px;background:#fff"></div>
<div style="left:576.8px;top:220.9px;width:93.8px;height:16.77px;background:#fff"></div>
<div style="left:673.4px;top:220.9px;width:113px;height:16.77px;background:#fff"></div>
<span class="t s" style="left:464.4px;top:221.2px;font-size:14.3px;line-height:17.16px;letter-spacing:0.000px;color:#d8ecea;;transform:scaleX(0.9911);transform-origin:0 50%;">Ada Totalsource</span>
<div style="left:382.4px;top:240.67px;width:76.4px;height:51.71px;background:#fff"></div>
<div style="left:384px;top:295.38px;width:75.2px;height:72.28px;background:#fff"></div>
<div style="left:462.8px;top:237.67px;width:112.4px;height:24.57px;background:#fff"></div>
<div style="left:462.8px;top:266.24px;width:112.4px;height:31.14px;background:#fff"></div>
<div style="left:464px;top:303.38px;width:111.2px;height:74.28px;background:#fff"></div>
<div style="left:579.2px;top:237.67px;width:90px;height:57.71px;background:#fff"></div>
<div style="left:579.2px;top:301.38px;width:88.8px;height:84.85px;background:#fff"></div>
<div style="left:673.2px;top:240.67px;width:105.8px;height:34.14px;background:#fff"></div>
<div style="left:673.2px;top:274.81px;width:140.8px;height:37.14px;background:#fff"></div>
<div style="left:673.2px;top:311.95px;width:106.8px;height:43.14px;background:#fff"></div>
<div style="left:386px;top:388.23px;width:73.2px;height:127.99px;background:#fff"></div>
<div style="left:464px;top:386.23px;width:106px;height:41.14px;background:#fff"></div>
<div style="left:464px;top:429.37px;width:110.8px;height:37.14px;background:#fff"></div>
<div style="left:579.6px;top:386.23px;width:86.4px;height:80.28px;background:#fff"></div>
<div style="left:674px;top:367.66px;width:116px;height:65.71px;background:#fff"></div>
<div style="left:674px;top:445.94px;width:126px;height:33.14px;background:#fff"></div>
<div style="left:386px;top:240.07px;width:68px;height:1.2px;background:repeating-linear-gradient(90deg,#8a8a8a 0 3px,transparent 3px 6px)"></div>
<div style="left:386px;top:294.58px;width:68px;height:1.2px;background:repeating-linear-gradient(90deg,#8a8a8a 0 3px,transparent 3px 6px)"></div>
<div style="left:384px;top:313.95px;width:72px;height:1.2px;background:repeating-linear-gradient(90deg,#8a8a8a 0 3px,transparent 3px 6px)"></div>
<div style="left:386px;top:332.52px;width:66px;height:1.2px;background:repeating-linear-gradient(90deg,#8a8a8a 0 3px,transparent 3px 6px)"></div>
<div style="left:470px;top:263.44px;width:102px;height:1.2px;background:repeating-linear-gradient(90deg,#aaa 0 3px,transparent 3px 6px)"></div>
<div style="left:468px;top:298.98px;width:106px;height:1.2px;background:repeating-linear-gradient(90deg,#999 0 3px,transparent 3px 6px)"></div>
<div style="left:678px;top:239.27px;width:106px;height:1.2px;background:repeating-linear-gradient(90deg,#aaa 0 3px,transparent 3px 6px)"></div>
<div style="left:680px;top:443.94px;width:110px;height:1.2px;background:repeating-linear-gradient(90deg,#aaa 0 3px,transparent 3px 6px)"></div>
<div style="left:676px;top:461.71px;width:114px;height:1.2px;background:repeating-linear-gradient(90deg,#aaa 0 3px,transparent 3px 6px)"></div>
<div style="left:384px;top:517.42px;width:76px;height:1.2px;background:repeating-linear-gradient(90deg,#777 0 3px,transparent 3px 6px)"></div>
<div style="left:468px;top:514.05px;width:104px;height:1.2px;background:repeating-linear-gradient(90deg,#999 0 3px,transparent 3px 6px)"></div>
<div style="left:146px;top:558px;width:10.8px;height:11.6px;background:#fff;box-shadow:inset 1px 1px 0 #808080,inset -1px -1px 0 #e8e2d4,inset 2px 2px 0 #404040"></div>
<span class="t s" style="left:163.6px;top:556.48px;font-size:13.2px;line-height:15.84px;letter-spacing:0.000px;color:#333;;transform:scaleX(0.9924);transform-origin:0 50%;">Calls Through Today</span>
<span class="t s b" style="left:320px;top:552.8px;font-size:13px;line-height:15.6px;letter-spacing:0.000px;color:#0000f0;text-decoration:underline;transform:scaleX(0.9862);transform-origin:0 50%;">No Calls Scheduled Today</span>
<span class="t s" style="left:785px;top:553.04px;font-size:12.6px;line-height:15.12px;letter-spacing:0.088px;color:#333;">1 of 20 cases</span>
<div style="left:127px;top:592.8px;width:984.2px;height:1.8px;background:#6a6252"></div>
<div style="left:127px;top:594.6px;width:984.2px;height:1.4px;background:#f8f5ee"></div>
<div style="left:143.8px;top:606.8px;width:93.8px;height:22.4px;background:#d5ccbb;box-shadow:inset -1px -1px 0 #404040,inset 1px 1px 0 #fff,inset -2px -2px 0 #8d8676"></div>
<span class="t s" style="left:158px;top:610.62px;font-size:13.8px;line-height:16.56px;letter-spacing:0.000px;color:#333;;transform:scaleX(0.9454);transform-origin:0 50%;">Open Case</span>
<div style="left:396.8px;top:606.8px;width:94.2px;height:22.4px;background:#d5ccbb;box-shadow:inset -1px -1px 0 #404040,inset 1px 1px 0 #fff,inset -2px -2px 0 #8d8676"></div>
<span class="t s" style="left:405.6px;top:610.62px;font-size:13.8px;line-height:16.56px;letter-spacing:0.000px;color:#333;;transform:scaleX(0.9331);transform-origin:0 50%;">Quick Access</span>
<div style="left:513px;top:606.8px;width:59px;height:22.4px;background:#d5ccbb;box-shadow:inset -1px -1px 0 #404040,inset 1px 1px 0 #fff,inset -2px -2px 0 #8d8676"></div>
<span class="t s" style="left:525px;top:610.62px;font-size:13.8px;line-height:16.56px;letter-spacing:0.000px;color:#333;;transform:scaleX(0.9709);transform-origin:0 50%;">Notes</span>
<div style="left:594px;top:606.8px;width:78.4px;height:22.4px;background:#d5ccbb;box-shadow:inset -1px -1px 0 #404040,inset 1px 1px 0 #fff,inset -2px -2px 0 #8d8676"></div>
<span class="t s" style="left:604px;top:610.62px;font-size:13.8px;line-height:16.56px;letter-spacing:0.000px;color:#333;;transform:scaleX(0.9655);transform-origin:0 50%;">Scheduler</span>
<div style="left:692.4px;top:606.8px;width:120.6px;height:22.4px;background:#d5ccbb;box-shadow:inset -1px -1px 0 #404040,inset 1px 1px 0 #fff,inset -2px -2px 0 #8d8676"></div>
<span class="t s" style="left:703px;top:610.62px;font-size:13.8px;line-height:16.56px;letter-spacing:0.000px;color:#a79f8d;;transform:scaleX(0.9489);transform-origin:0 50%;">Group Scheduler</span>
<div style="left:832.4px;top:606.8px;width:56.2px;height:22.4px;background:#d5ccbb;box-shadow:inset -1px -1px 0 #404040,inset 1px 1px 0 #fff,inset -2px -2px 0 #8d8676"></div>
<span class="t s" style="left:844px;top:610.62px;font-size:13.8px;line-height:16.56px;letter-spacing:0.000px;color:#333;;transform:scaleX(0.9353);transform-origin:0 50%;">Close</span>
<div style="left:908px;top:606.8px;width:107.8px;height:22.4px;background:#d5ccbb;box-shadow:inset -1px -1px 0 #404040,inset 1px 1px 0 #fff,inset -2px -2px 0 #8d8676"></div>
<span class="t s" style="left:918px;top:610.62px;font-size:13.8px;line-height:16.56px;letter-spacing:0.000px;color:#333;;transform:scaleX(0.8964);transform-origin:0 50%;">Batch Fax Entry</span>
<div style="left:254px;top:608.4px;width:123.6px;height:18px;background:#fff;box-shadow:inset 1px 1px 0 #808080,inset -1px -1px 0 #f4f0e6,inset 2px 2px 0 #404040"></div>
<span class="t s" style="left:258px;top:610.88px;font-size:11.2px;line-height:13.44px;letter-spacing:0.000px;color:#333;;transform:scaleX(0.8456);transform-origin:0 50%;">All Cases</span>
<div style="left:363.6px;top:610.4px;width:12px;height:14.2px;background:#d5ccbb;box-shadow:inset -1px -1px 0 #404040,inset 1px 1px 0 #fff,inset -2px -2px 0 #808080"><svg width="12" height="14.2" style="position:absolute;left:0;top:0"><polygon points="3.0,5.600000000000023 9.0,5.600000000000023 6.0,9.100000000000023" fill="#000"/></svg></div>
<div style="left:6.4px;top:761px;width:49.2px;height:19.4px;background:#d5ccbb;box-shadow:inset -1px -1px 0 #404040,inset 1px 1px 0 #fff,inset -2px -2px 0 #808080"></div>
<svg style="left:9.2px;top:763.2px" width="13.6" height="13.6" viewBox="0 0 14 14"><path d="M1 2.5 Q4 0.5 7 2.5 L6 7 Q3 5 0 7Z" fill="#e8452c"/><path d="M8 3 Q11 5 14 3 L13 7.5 Q10 9.5 7 7.5Z" fill="#5cb33e"/><path d="M0 8 Q3 6 6 8 L5 12.5 Q2 10.5 -1 12.5Z" fill="#2a6fd6"/><path d="M7 8.5 Q10 10.5 13 8.5 L12 13 Q9 15 6 13Z" fill="#f5c400"/></svg>
<span class="t s b" style="left:27px;top:762.56px;font-size:13.4px;line-height:16.08px;letter-spacing:0.000px;color:#111;;transform:scaleX(0.8320);transform-origin:0 50%;">Start</span>
<div style="left:62.8px;top:762px;width:1.2px;height:18px;background:#b4aa96"></div>
<div style="left:64px;top:762px;width:1.4px;height:18px;background:#fff"></div>
<svg style="left:72px;top:763.4px" width="15.2" height="15.2" viewBox="0 0 16 16"><circle cx="8" cy="8" r="7.4" fill="#2d5fc4"/><path d="M8 8 L8 0.6 A7.4 7.4 0 0 0 0.6 8Z" fill="#f08a1c"/><path d="M8 8 L0.6 8 A7.4 7.4 0 0 0 8 15.4Z" fill="#4aa83a"/><circle cx="8" cy="8" r="4.6" fill="#f4f6fb"/><path d="M6.3 5.2 L11 8 L6.3 10.8Z" fill="#1f3f9c"/></svg>
<svg style="left:95.2px;top:763.6px" width="14.8" height="14.8" viewBox="0 0 16 16"><rect x="1" y="1.5" width="13" height="12.5" rx="2" fill="#3f86d8" stroke="#2b5aa6" stroke-width="1"/><rect x="4" y="4" width="8" height="7" fill="#cfe6fa"/><path d="M12 1 L15.5 3 L13 6Z" fill="#d8452c"/><rect x="5.5" y="5.5" width="4" height="3.5" fill="#7fb6ee"/></svg>
<svg style="left:117.2px;top:763.2px" width="16" height="15.6" viewBox="0 0 16 16"><ellipse cx="8" cy="8" rx="7.6" ry="3" fill="none" stroke="#f2c21a" stroke-width="1.6" transform="rotate(-28 8 8)"/><circle cx="8" cy="8.4" r="5.2" fill="#2f8be0"/><circle cx="8" cy="8.4" r="2.2" fill="#eaf4ff"/><rect x="8" y="8.2" width="5.4" height="1.8" fill="#eaf4ff"/><path d="M2 6 Q8 0 14.5 4" fill="none" stroke="#f2c21a" stroke-width="1.5"/></svg>
<span class="t s b" style="left:142px;top:759.6px;font-size:12px;line-height:14.4px;color:#222;">»</span>
<div style="left:155.4px;top:762px;width:1.2px;height:18px;background:#b4aa96"></div>
<div style="left:156.6px;top:762px;width:1.4px;height:18px;background:#fff"></div>
<div style="left:162.4px;top:761px;width:154px;height:19.4px;background:#d5ccbb;box-shadow:inset -1px -1px 0 #404040,inset 1px 1px 0 #fff,inset -2px -2px 0 #808080"></div>
<svg style="left:166px;top:763.6px" width="15.2" height="14.8" viewBox="0 0 16 16"><rect x="0.5" y="0.5" width="15" height="15" rx="2.5" fill="#f6b11e" stroke="#d48a0a"/><rect x="2.5" y="3" width="11" height="8" fill="#fff3cc"/><path d="M2.5 3 L8 8 L13.5 3" fill="none" stroke="#d48a0a" stroke-width="1"/><circle cx="8" cy="10" r="3.4" fill="#fff8e0" stroke="#e09a10" stroke-width="1"/></svg>
<span class="t s" style="left:186.2px;top:763.68px;font-size:12.2px;line-height:14.64px;letter-spacing:0.000px;color:#222;;transform:scaleX(0.8333);transform-origin:0 50%;">Inbox - Microsoft Outlook</span>
<div style="left:321.2px;top:761px;width:153.6px;height:19.4px;background:#d5ccbb;box-shadow:inset -1px -1px 0 #404040,inset 1px 1px 0 #fff,inset -2px -2px 0 #808080"></div>
<svg style="left:326px;top:763.6px" width="14.8" height="14.8" viewBox="0 0 16 16"><rect x="3" y="0.5" width="12" height="15" rx="1" fill="#f4f7fd" stroke="#6f88c0"/><rect x="0.5" y="4" width="9" height="9" rx="1" fill="#2f5fc0"/><text x="5" y="11.6" font-family="Liberation Sans,sans-serif" font-weight="bold" font-size="8" fill="#fff" text-anchor="middle">W</text></svg>
<span class="t s" style="left:344.8px;top:763.68px;font-size:12.2px;line-height:14.64px;letter-spacing:0.000px;color:#222;;transform:scaleX(0.8417);transform-origin:0 50%;">Document1 - Microsoft W...</span>
<div style="left:480px;top:761px;width:156px;height:19.4px;background:#ece8df;box-shadow:inset 1px 1px 0 #404040,inset -1px -1px 0 #fff,inset 2px 2px 0 #808080"></div>
<svg style="left:484.8px;top:763.8px" width="14.8" height="14.4" viewBox="0 0 16 16"><path d="M0.5 3 L4 0.5 L8 3.5 L12 0.5 L15.5 3 L14 10 L8 15.5 L2 10Z" fill="#1a1030"/><path d="M1.5 3.5 L5 2 L8 5 L11 2 L14.5 3.5 L13.5 9.5 L8 14.5 L2.5 9.5Z" fill="#c426c4"/><path d="M5.4 4.5 L8 3.6 L10.6 4.5 L10 10.5 L8 14 L6 10.5Z" fill="#7ef01a"/><circle cx="8" cy="8" r="2" fill="#fff46a"/><path d="M1.5 3.5 L4.5 5 L3 8.5Z" fill="#e83aa8"/><path d="M14.5 3.5 L11.5 5 L13 8.5Z" fill="#6a1a8a"/></svg>
<span class="t s b" style="left:504.8px;top:763.56px;font-size:12.4px;line-height:14.88px;letter-spacing:0.000px;color:#111;;transform:scaleX(0.8899);transform-origin:0 50%;">TOPCATI: Enrollment...</span>
<div style="left:966.8px;top:762px;width:1.2px;height:18px;background:#b4aa96"></div>
<div style="left:968px;top:762px;width:1.4px;height:18px;background:#fff"></div>
<span class="t s" style="left:974.4px;top:763.68px;font-size:12.2px;line-height:14.64px;letter-spacing:0.000px;color:#333;;transform:scaleX(0.8708);transform-origin:0 50%;">Links</span>
<span class="t s b" style="left:1005.2px;top:759.6px;font-size:12px;line-height:14.4px;color:#222;">»</span>
<div style="left:1016px;top:761px;width:233.6px;height:19.6px;box-shadow:inset 1px 1px 0 #9a917e,inset -1px -1px 0 #fff"></div>
<svg style="left:1019.8px;top:764.4px" width="13.6" height="13.6" viewBox="0 0 16 16"><rect x="0.5" y="0.5" width="15" height="15" rx="2.5" fill="#f6b11e" stroke="#d48a0a"/><rect x="2.5" y="3" width="11" height="8" fill="#fff3cc"/><path d="M2.5 3 L8 8 L13.5 3" fill="none" stroke="#d48a0a" stroke-width="1"/><circle cx="8" cy="10" r="3.4" fill="#fff8e0" stroke="#e09a10" stroke-width="1"/></svg>
<svg style="left:1036.4px;top:764.8px" width="14" height="12.8" viewBox="0 0 16 16"><rect x="0.5" y="0.5" width="15" height="15" rx="3" fill="#3aa0b8" stroke="#2a6f88"/><rect x="3" y="3" width="10" height="9" rx="1.5" fill="#c8ecf2"/></svg>
<svg style="left:1054px;top:764px" width="13.2" height="13.6" viewBox="0 0 16 16"><circle cx="8" cy="8" r="7.5" fill="#1f2f7a"/><path d="M5 3 Q3.5 8 7 12 L9 10.5 Q7 8.5 7.5 5Z" fill="#fff"/><circle cx="10.5" cy="5.5" r="1.6" fill="#9fb6ee"/></svg>
<svg style="left:1070px;top:764px" width="16.8" height="14.4" viewBox="0 0 18 16"><circle cx="5" cy="10.5" r="4" fill="#d8c21a" stroke="#8a7a10"/><rect x="8" y="9.5" width="8" height="2.6" fill="#d8c21a" stroke="#8a7a10" stroke-width="0.6"/><path d="M11 1 L16 6 M16 1 L11 6" stroke="#e01818" stroke-width="1.8"/></svg>
<svg style="left:1088px;top:764.4px" width="15.6" height="14" viewBox="0 0 16 16"><rect x="0.8" y="0.8" width="14.4" height="10.4" fill="#eef2ff" stroke="#2a3aa0" stroke-width="1.6"/><rect x="5" y="11.5" width="6" height="1.6" fill="#2a3aa0"/><rect x="2.5" y="13" width="11" height="1.8" fill="#2a3aa0"/></svg>
<svg style="left:1106px;top:764.4px" width="16" height="14.4" viewBox="0 0 16 16"><rect x="0.8" y="1" width="10.5" height="8" fill="#6f7fb0" stroke="#2f3f78" stroke-width="1.4"/><rect x="3" y="9.5" width="6" height="2" fill="#2f3f78"/><path d="M8.5 8.5 L14.5 14.5 M14.5 8.5 L8.5 14.5" stroke="#e01818" stroke-width="2"/></svg>
<svg style="left:1125.6px;top:764.4px" width="13.6" height="13.6" viewBox="0 0 16 16"><circle cx="8" cy="8" r="7" fill="#8a8a9a"/><circle cx="8" cy="8" r="4.4" fill="#d9dbe6"/><path d="M4 8 A4 4 0 0 1 12 8Z" fill="#4a4a5a"/><path d="M11 12 L15 15.5" stroke="#9aa0d8" stroke-width="2"/></svg>
<svg style="left:1141.6px;top:764px" width="15.6" height="14.4" viewBox="0 0 16 16"><rect x="2" y="0.5" width="8" height="6" fill="#2fae3a" stroke="#1a7a26"/><path d="M5 8 L14 6.5 L15.5 12 L6 14.5Z" fill="#8a8f9a" stroke="#4a4f5a" stroke-width="0.8"/><path d="M6 7 L4 11" stroke="#2fae3a" stroke-width="1.4"/></svg>
<svg style="left:1160.8px;top:763.8px" width="14" height="14.6" viewBox="0 0 14 16"><path d="M0.5 0.5 H13.5 V8 Q13.5 13 7 15.5 Q0.5 13 0.5 8Z" fill="#1f4fc4" stroke="#163a94"/><path d="M3.5 3 H10.5 V8 Q10.5 11 7 12.6 Q3.5 11 3.5 8Z" fill="#fff"/><path d="M5.4 4.6 L7 9.6 L8.6 4.6" fill="none" stroke="#e0183a" stroke-width="1.6"/></svg>
<div style="left:1177.2px;top:764.4px;width:8px;height:8px;border-radius:50%;background:#e8d820"></div>
<div style="left:1184.6px;top:763.6px;width:7.6px;height:7.6px;border-radius:50%;background:#e82020"></div>
<div style="left:1176.2px;top:771px;width:8px;height:8px;border-radius:50%;background:#2a6ad8"></div>
<div style="left:1183.2px;top:772.4px;width:6.8px;height:6.8px;border-radius:50%;background:#30a040"></div>
<span class="t s" style="left:1202.4px;top:763.6px;font-size:12px;line-height:14.4px;letter-spacing:0.000px;color:#333;;transform:scaleX(0.8414);transform-origin:0 50%;">9:43 AM</span>
</div></body></html>
